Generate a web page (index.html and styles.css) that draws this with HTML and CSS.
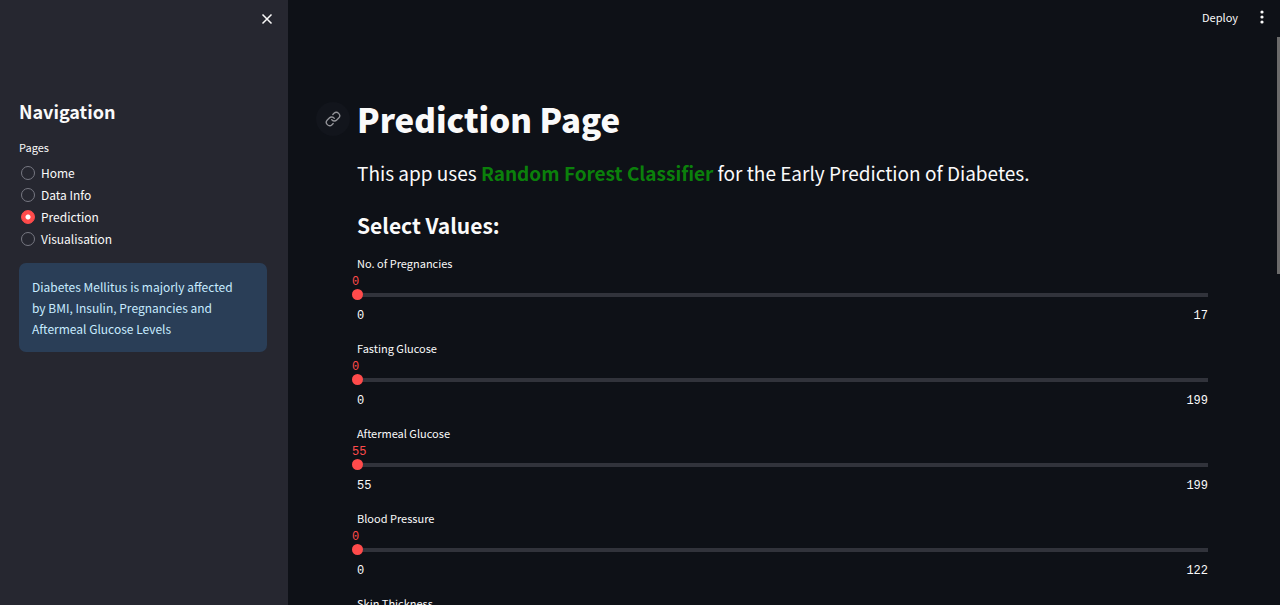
FILE: index.html
```html
<!DOCTYPE html>
<html lang="en">
<head>
<meta charset="utf-8">
<meta name="viewport" content="width=device-width, initial-scale=1">
<title>Prediction Page</title>
<link rel="stylesheet" href="styles.css">
</head>
<body>
<div class="app">
  <aside class="sidebar">
    <div class="sidebar-top">
      <button class="icon-button" type="button" aria-label="Close sidebar">
        <svg width="18" height="18" viewBox="0 0 18 18" fill="none" stroke="currentColor" stroke-width="1.5"><path d="M4.5 4.5l9 9M13.500 4.500l-9 9"/></svg>
      </button>
    </div>
    <h2 class="nav-title">Navigation</h2>
    <fieldset class="pages">
      <legend class="pages-label">Pages</legend>
      <label class="page-option"><input class="radio" type="radio" name="page">Home</label>
      <label class="page-option"><input class="radio" type="radio" name="page">Data Info</label>
      <label class="page-option"><input class="radio" type="radio" name="page" checked>Prediction</label>
      <label class="page-option"><input class="radio" type="radio" name="page">Visualisation</label>
    </fieldset>
    <p class="info">Diabetes Mellitus is majorly affected by BMI, Insulin, Pregnancies and Aftermeal Glucose Levels</p>
  </aside>
  <div class="main">
    <header class="toolbar">
      <button class="deploy" type="button">Deploy</button>
      <button class="icon-button" type="button" aria-label="Menu">
        <svg width="18" height="18" viewBox="0 0 18 18" fill="currentColor"><circle cx="9" cy="4" r="1.600"/><circle cx="9" cy="9" r="1.600"/><circle cx="9" cy="14" r="1.600"/></svg>
      </button>
    </header>
    <main class="content">
      <h1 class="title" id="prediction-page">
        <a class="anchor" href="#prediction-page" aria-label="Link to heading">
          <svg width="16" height="16" viewBox="0 0 24 24" fill="none" stroke="currentColor" stroke-width="2" stroke-linecap="round" stroke-linejoin="round"><path d="M10 13a5 5 0 0 0 7.540.540l3-3a5 5 0 0 0-7.070-7.070l-1.720 1.710"/><path d="M14 11a5 5 0 0 0-7.540-.540l-3 3a5 5 0 0 0 7.070 7.070l1.710-1.710"/></svg>
        </a>Prediction Page</h1>
      <p class="lead">This app uses <b class="accent">Random Forest Classifier</b> for the Early Prediction of Diabetes.</p>
      <h2 class="subtitle">Select Values:</h2>
      <div class="field">
        <label class="field-label" for="pregnancies">No. of Pregnancies</label>
        <output class="value" for="pregnancies">0</output>
        <div class="track"><input class="range" id="pregnancies" type="range" min="0" max="17" value="0"></div>
        <div class="limits"><span>0</span><span>17</span></div>
      </div>
      <div class="field">
        <label class="field-label" for="fasting">Fasting Glucose</label>
        <output class="value" for="fasting">0</output>
        <div class="track"><input class="range" id="fasting" type="range" min="0" max="199" value="0"></div>
        <div class="limits"><span>0</span><span>199</span></div>
      </div>
      <div class="field">
        <label class="field-label" for="aftermeal">Aftermeal Glucose</label>
        <output class="value" for="aftermeal">55</output>
        <div class="track"><input class="range" id="aftermeal" type="range" min="55" max="199" value="55"></div>
        <div class="limits"><span>55</span><span>199</span></div>
      </div>
      <div class="field">
        <label class="field-label" for="pressure">Blood Pressure</label>
        <output class="value" for="pressure">0</output>
        <div class="track"><input class="range" id="pressure" type="range" min="0" max="122" value="0"></div>
        <div class="limits"><span>0</span><span>122</span></div>
      </div>
      <div class="field">
        <label class="field-label" for="skin">Skin Thickness</label>
        <output class="value" for="skin">0</output>
        <div class="track"><input class="range" id="skin" type="range" min="0" value="0"></div>
      </div>
    </main>
    <div class="scroll-thumb"></div>
  </div>
</div>
</body>
</html>
```
FILE: styles.css
```css
* { box-sizing: border-box; }
body {
  margin: 0;
  background: #0e1117;
  color: #fafafa;
  font-family: "Noto Sans CJK SC", "Noto Sans", sans-serif;
  font-size: 12px;
}
h1, h2, p { margin: 0; }
button {
  border: 0;
  padding: 0;
  background: none;
  color: inherit;
  font: inherit;
}
.app { display: flex; height: 100vh; overflow: hidden; }
.sidebar {
  flex: 0 0 288px;
  padding: 0 21px 0 19px;
  background: #262730;
}
.sidebar-top {
  display: flex;
  justify-content: flex-end;
  height: 95px;
  padding-top: 10px;
  margin-right: -9px;
}
.icon-button { display: flex; width: 18px; height: 18px; }
.nav-title { font-size: 18px; line-height: 32px; font-weight: 600; }
.pages { border: 0; margin: 0; padding: 0; }
.pages-label { padding: 10px 0 5px; font-size: 11px; line-height: 20px; }
.page-option {
  display: flex;
  align-items: center;
  gap: 6px;
  height: 22px;
  padding-left: 2px;
  line-height: 16px;
}
.radio {
  appearance: none;
  width: 14px;
  height: 14px;
  margin: 0;
  border: 1px solid #777882;
  border-radius: 50%;
}
.radio:checked {
  border-color: #ff4b4b;
  background: radial-gradient(circle, #fff 0 2px, #ff4b4b 3px);
}
.info {
  margin-top: 13px;
  padding: 13px 20px 13px 13px;
  border-radius: 7px;
  background: #2a3e57;
  color: #c7ebff;
  line-height: 21px;
}
.main { position: relative; flex: 1; min-width: 0; }
.toolbar {
  display: flex;
  align-items: center;
  justify-content: flex-end;
  gap: 15px;
  height: 34px;
  padding-right: 9px;
}
.deploy { font-size: 11px; line-height: 18px; }
.content { padding: 61px 72px 0 69px; }
.title { position: relative; font-size: 33px; line-height: 48px; font-weight: 900; }
.anchor {
  position: absolute;
  top: 7px;
  left: -41px;
  display: grid;
  place-items: center;
  width: 34px;
  height: 34px;
  border-radius: 50%;
  background: #12151c;
  color: #94959a;
}
.lead { margin-top: 14px; font-size: 19px; line-height: 32px; }
.accent { color: #0b800b; font-weight: 700; }
.subtitle { margin: 20px 0 13px; font-size: 21px; line-height: 32px; font-weight: 600; }
.field { margin-bottom: 14px; }
.field-label { display: block; font-size: 11px; line-height: 18px; }
.value {
  display: block;
  margin: 4px 0 0 -5px;
  color: #ff4b4b;
  font-family: "Liberation Mono", monospace;
  font-size: 12px;
  line-height: 12px;
}
.track {
  display: flex;
  height: 13px;
  background: linear-gradient(#31333b, #31333b) center / 100% 4px no-repeat;
}
.range {
  appearance: none;
  flex: 1;
  height: 13px;
  margin: 0 -5px;
  background: none;
}
.range::-webkit-slider-thumb {
  appearance: none;
  width: 11px;
  height: 11px;
  border-radius: 50%;
  background: #ff4b4b;
}
.limits {
  display: flex;
  justify-content: space-between;
  margin-top: 6px;
  font-family: "Liberation Mono", monospace;
  font-size: 12px;
  line-height: 18px;
}
.scroll-thumb {
  position: absolute;
  top: 37px;
  right: 0;
  width: 3px;
  height: 237px;
  background: #6b6b6b;
}
```
